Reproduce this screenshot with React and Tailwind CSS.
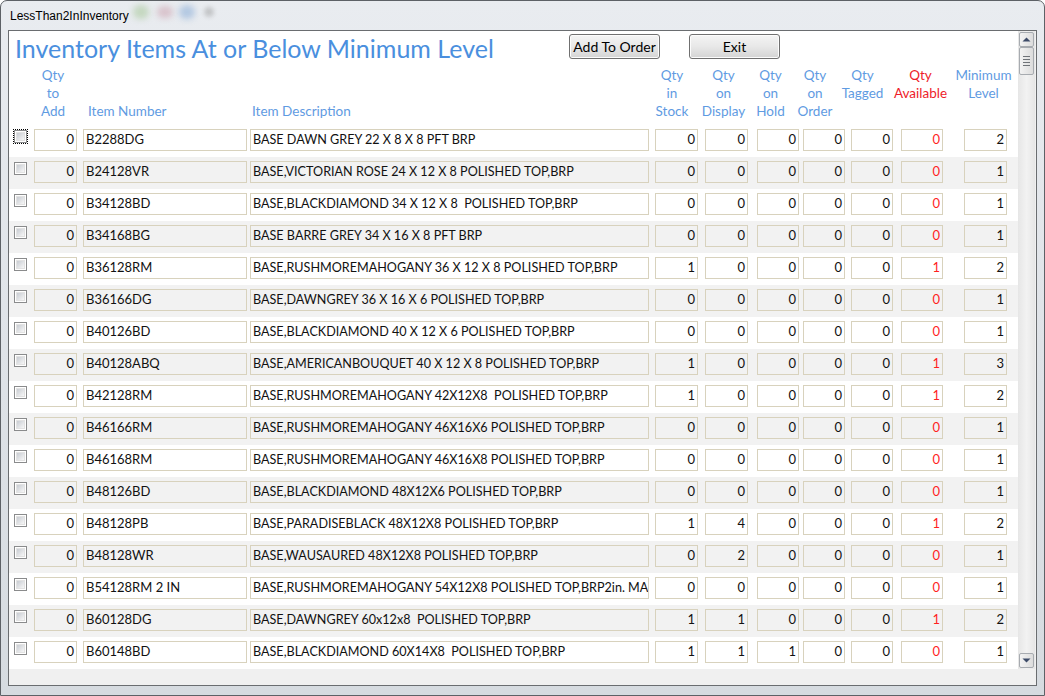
import React from 'react';

const rows = [
    ['B2288DG', 'BASE DAWN GREY 22 X 8 X 8 PFT BRP', 0, 0, 0, 0, 0, 0, 2],
    ['B24128VR', 'BASE,VICTORIAN ROSE 24 X 12 X 8 POLISHED TOP,BRP', 0, 0, 0, 0, 0, 0, 1],
    ['B34128BD', 'BASE,BLACKDIAMOND 34 X 12 X 8  POLISHED TOP,BRP', 0, 0, 0, 0, 0, 0, 1],
    ['B34168BG', 'BASE BARRE GREY 34 X 16 X 8 PFT BRP', 0, 0, 0, 0, 0, 0, 1],
    ['B36128RM', 'BASE,RUSHMOREMAHOGANY 36 X 12 X 8 POLISHED TOP,BRP', 1, 0, 0, 0, 0, 1, 2],
    ['B36166DG', 'BASE,DAWNGREY 36 X 16 X 6 POLISHED TOP,BRP', 0, 0, 0, 0, 0, 0, 1],
    ['B40126BD', 'BASE,BLACKDIAMOND 40 X 12 X 6 POLISHED TOP,BRP', 0, 0, 0, 0, 0, 0, 1],
    ['B40128ABQ', 'BASE,AMERICANBOUQUET 40 X 12 X 8 POLISHED TOP,BRP', 1, 0, 0, 0, 0, 1, 3],
    ['B42128RM', 'BASE,RUSHMOREMAHOGANY 42X12X8  POLISHED TOP,BRP', 1, 0, 0, 0, 0, 1, 2],
    ['B46166RM', 'BASE,RUSHMOREMAHOGANY 46X16X6 POLISHED TOP,BRP', 0, 0, 0, 0, 0, 0, 1],
    ['B46168RM', 'BASE,RUSHMOREMAHOGANY 46X16X8 POLISHED TOP,BRP', 0, 0, 0, 0, 0, 0, 1],
    ['B48126BD', 'BASE,BLACKDIAMOND 48X12X6 POLISHED TOP,BRP', 0, 0, 0, 0, 0, 0, 1],
    ['B48128PB', 'BASE,PARADISEBLACK 48X12X8 POLISHED TOP,BRP', 1, 4, 0, 0, 0, 1, 2],
    ['B48128WR', 'BASE,WAUSAURED 48X12X8 POLISHED TOP,BRP', 0, 2, 0, 0, 0, 0, 1],
    ['B54128RM 2 IN', 'BASE,RUSHMOREMAHOGANY 54X12X8 POLISHED TOP,BRP2in. MA', 0, 0, 0, 0, 0, 0, 1],
    ['B60128DG', 'BASE,DAWNGREY 60x12x8  POLISHED TOP,BRP', 1, 1, 0, 0, 0, 1, 2],
    ['B60148BD', 'BASE,BLACKDIAMOND 60X14X8  POLISHED TOP,BRP', 1, 1, 1, 0, 0, 0, 1],
];

// one text box of the continuous form
const Box = ({ className, children, right, red }) => (
    <div
        className={`h-[22px] shrink-0 border border-[#d8d2bd] flex items-center overflow-hidden whitespace-pre ${
            right ? 'justify-end pr-[2px]' : 'pl-[2px]'
        } ${red ? 'text-[#ff1f1f]' : 'text-[#111]'} ${className}`}
    >
        {children}
    </div>
);

const CheckBox = ({ focused }) => (
    <div
        className={`ml-[5px] mt-[1px] w-[13px] h-[13px] shrink-0 ${
            focused ? 'outline outline-1 outline-dotted outline-black' : ''
        } border border-[#8a8b8c] bg-white p-[1px]`}
    >
        <div className="w-full h-full bg-gradient-to-br from-[#c8ccd2] to-[#f7f7f7] border border-[#e2e2e2]" />
    </div>
);

const Label = ({ className, lines, red }) => (
    <div
        className={`shrink-0 flex flex-col items-center leading-[18px] whitespace-nowrap ${
            red ? 'text-[#ee1c2a]' : 'text-[#5f9be2]'
        } ${className}`}
    >
        {lines.map((l) => (
            <span key={l}>{l}</span>
        ))}
    </div>
);

const Button = ({ className, children }) => (
    <button
        className={`h-[25px] w-[91px] shrink-0 rounded-[3px] border border-[#707070] bg-gradient-to-b from-[#f4f4f4] via-[#e8e8e8] to-[#d4d4d4] text-[14px] text-black shadow-[inset_0_0_0_1px_#fcfcfc] ${className}`}
    >
        {children}
    </button>
);

const Arrow = ({ up }) => (
    <div className="w-[15px] h-[15px] ml-[1px] rounded-[2px] border border-[#a7abb0] bg-gradient-to-r from-[#f3f3f3] to-[#dcdcdc] flex items-center justify-center">
        <svg width="9" height="5" viewBox="0 0 9 5">
            <path d={up ? 'M0.5 4.5 L4.5 0.5 L8.5 4.5 Z' : 'M0.5 0.5 L4.5 4.5 L8.5 0.5 Z'} fill="#3d4b68" />
        </svg>
    </div>
);

export default function App() {
    return (
        <div
            className="w-[1045px] h-[696px] relative flex flex-col rounded-t-[7px] border border-[#5d6166] bg-gradient-to-b from-[#e9ecf0] via-[#dfe3e8] to-[#d6dbe0] overflow-hidden"
            style={{ fontFamily: 'Lato, "Open Sans", sans-serif' }}
        >
            {/* glass blur behind the title */}
            <div className="absolute left-[132px] top-[4px] w-[16px] h-[14px] rounded-full bg-[#9fc38f] opacity-50 blur-[3px]" />
            <div className="absolute left-[156px] top-[5px] w-[16px] h-[12px] rounded-full bg-[#c99aa8] opacity-50 blur-[3px]" />
            <div className="absolute left-[178px] top-[4px] w-[16px] h-[14px] rounded-full bg-[#8fb0d8] opacity-60 blur-[3px]" />
            <div className="absolute left-[203px] top-[6px] w-[10px] h-[10px] rounded-full bg-[#8d8d8d] opacity-40 blur-[2px]" />

            <div
                className="h-[29px] shrink-0 pl-[9px] pt-[6px] text-[12px] text-black relative"
                style={{ fontFamily: '"Liberation Sans", Arial, sans-serif' }}
            >
                LessThan2InInventory
            </div>

            <div className="ml-[7px] mr-[7px] h-[656px] shrink-0 border border-[#6a6d70] bg-[#f0f0f0] flex flex-col text-[13px]">
                <div className="flex h-[638px]">
                    <div className="w-[1009px] shrink-0 bg-white flex flex-col">
                        {/* header */}
                        <div className="h-[94px] shrink-0 flex flex-col">
                            <div className="h-[35px] flex items-start">
                                <div className="ml-[6px] w-[554px] shrink-0 text-[25px] leading-[30px] mt-[2px] text-[#4a8fde]">
                                    Inventory Items At or Below Minimum Level
                                </div>
                                <Button className="mt-[3px]">Add To Order</Button>
                                <Button className="mt-[3px] ml-[29px]">Exit</Button>
                            </div>
                            <div className="flex h-[59px] text-[13.5px]">
                                <Label className="ml-[24px] w-[40px]" lines={['Qty', 'to', 'Add']} />
                                <div className="ml-[15px] w-[162px] shrink-0 pt-[36px] leading-[18px] text-[#5f9be2]">Item Number</div>
                                <div className="ml-[2px] w-[392px] shrink-0 pt-[36px] leading-[18px] text-[#5f9be2]">Item Description</div>
                                <Label className="ml-[8px] w-[40px]" lines={['Qty', 'in', 'Stock']} />
                                <Label className="ml-[8px] w-[47px]" lines={['Qty', 'on', 'Display']} />
                                <Label className="ml-[3px] w-[41px]" lines={['Qty', 'on', 'Hold']} />
                                <Label className="ml-[4px] w-[40px]" lines={['Qty', 'on', 'Order']} />
                                <Label className="ml-[3px] w-[49px]" lines={['Qty', 'Tagged']} />
                                <Label className="ml-[3px] w-[61px]" lines={['Qty', 'Available']} red />
                                <Label className="ml-[1px] w-[63px]" lines={['Minimum', 'Level']} />
                            </div>
                        </div>

                        {/* detail rows */}
                        {rows.map((r, i) => (
                            <div
                                key={r[0]}
                                className={`flex h-[32px] shrink-0 pt-[4px] ${i % 2 ? 'bg-[#f2f2f2]' : 'bg-white'}`}
                            >
                                <CheckBox focused={i === 0} />
                                <Box className="ml-[7px] w-[43px]" right>0</Box>
                                <Box className="ml-[6px] w-[164px]">{r[0]}</Box>
                                <Box className="ml-[3px] w-[399px] text-[12.6px]">{r[1]}</Box>
                                <Box className="ml-[6px] w-[43px]" right>{r[2]}</Box>
                                <Box className="ml-[7px] w-[43px]" right>{r[3]}</Box>
                                <Box className="ml-[9px] w-[42px]" right>{r[4]}</Box>
                                <Box className="ml-[4px] w-[42px]" right>{r[5]}</Box>
                                <Box className="ml-[6px] w-[42px]" right>{r[6]}</Box>
                                <Box className="ml-[8px] w-[42px]" right red>{r[7]}</Box>
                                <Box className="ml-[21px] w-[43px]" right>{r[8]}</Box>
                            </div>
                        ))}
                    </div>

                    {/* vertical scrollbar */}
                    <div className="w-[17px] shrink-0 bg-gradient-to-r from-[#e6e6e6] via-[#f2f2f2] to-[#e6e6e6] flex flex-col pt-[1px] pb-[1px]">
                        <Arrow up />
                        <div className="w-[15px] h-[28px] ml-[1px] rounded-[2px] border border-[#a7abb0] bg-gradient-to-r from-[#f3f3f3] to-[#dcdcdc] flex flex-col items-center justify-center gap-[2px]">
                            <div className="w-[7px] h-[1px] bg-[#6f7378]" />
                            <div className="w-[7px] h-[1px] bg-[#6f7378]" />
                            <div className="w-[7px] h-[1px] bg-[#6f7378]" />
                            <div className="w-[7px] h-[1px] bg-[#6f7378]" />
                        </div>
                        <div className="flex-1" />
                        <Arrow />
                    </div>
                </div>
            </div>
        </div>
    );
}
